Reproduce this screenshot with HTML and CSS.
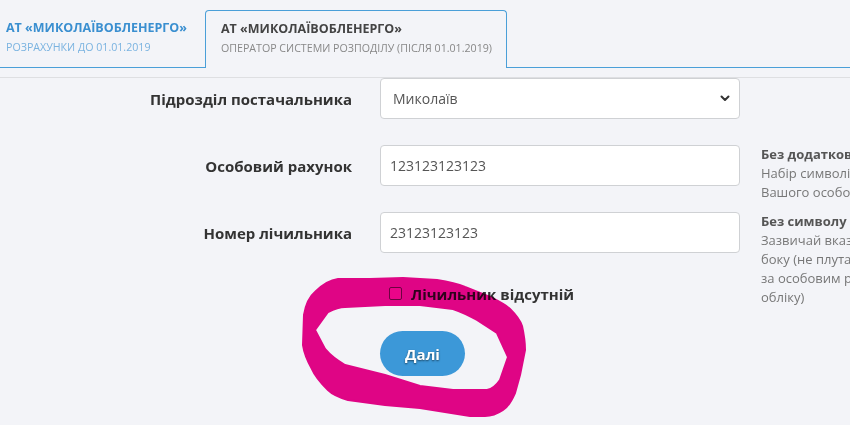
FILE: index.html
```html
<!DOCTYPE html>
<html lang="uk">
<head>
<meta charset="utf-8">
<title>Миколаївобленерго</title>
<link rel="stylesheet" href="styles.css">
</head>
<body>
<div class="tabs">
  <div class="tab tab-first">
    <div class="tab-title">АТ «МИКОЛАЇВОБЛЕНЕРГО»</div>
    <div class="tab-sub">РОЗРАХУНКИ ДО 01.01.2019</div>
  </div>
  <div class="tab tab-active">
    <div class="tab-title">АТ «МИКОЛАЇВОБЛЕНЕРГО»</div>
    <div class="tab-sub">ОПЕРАТОР СИСТЕМИ РОЗПОДІЛУ (ПІСЛЯ 01.01.2019)</div>
  </div>
</div>
<div class="panel">
  <div class="form">
    <div class="label">Підрозділ постачальника</div>
    <div class="select">
      <span>Миколаїв</span>
      <svg class="chevron" width="10" height="7" viewBox="0 0 10 7"><path d="M1.5 1.5 L5 5 L8.5 1.5" fill="none" stroke="#333" stroke-width="2" stroke-linecap="round" stroke-linejoin="round"/></svg>
    </div>
    <div class="help"></div>

    <div class="label">Особовий рахунок</div>
    <div class="input">123123123123</div>
    <div class="help">
      <div class="help-title">Без додаткових символів</div>
      <div>Набір символів, що складається з цифр</div>
      <div>Вашого особового рахунку</div>
    </div>

    <div class="label">Номер лічильника</div>
    <div class="input">23123123123</div>
    <div class="help">
      <div class="help-title">Без символу "№"</div>
      <div>Зазвичай вказаний на лицьовому</div>
      <div>боку (не плутати з номером пломби)</div>
      <div>за особовим рахунком приладу</div>
      <div>обліку)</div>
    </div>

    <div class="spacer"></div>
    <label class="check">
      <span class="box"></span>
      <span class="check-text">Лічильник відсутній</span>
    </label>
    <div class="spacer"></div>

    <div class="spacer"></div>
    <div class="actions">
      <button class="btn" type="button">Далі</button>
    </div>
    <div class="spacer"></div>
  </div>
</div>
<svg class="scribble" width="850" height="425" viewBox="0 0 850 425">
  <path fill="#ea0589" fill-rule="evenodd" stroke="#ea0589" stroke-width="2" stroke-linejoin="round"
    d="M338,279 C350,279 360,279 370,279 L403,278 L437,280 C450,282 458,284 465,287 L490,297 C500,302 506,305 510,309 C517,316 520,320 522,326 C524,335 525,343 525,350 L520,375 L515,393 C511,402 508,407 503,410 C497,414 490,416 485,416 L470,416 L420,408 L385,405 L348,400 C338,397 332,394 328,390 C320,382 315,376 312,369 C307,360 304,352 303,345 L304,315 C306,303 309,297 315,292 C322,285 330,280 338,279 Z
       M385,305 L420,305 L453,309 C462,312 470,316 477,320 L497,333 L508,357 L500,380 C496,386 492,389 487,390 L453,390 L420,386 L385,375 L345,365 C336,360 330,355 325,349 L315,330 L328,312 C334,309 339,307 345,307 Z"/>
</svg>
</body>
</html>
```

FILE: styles.css
```css
html, body {
  margin: 0;
  padding: 0;
}
body {
  width: 850px;
  height: 425px;
  overflow: hidden;
  background: #f3f4f8;
  font-family: "Open Sans", "Noto Sans", sans-serif;
  color: #333;
  position: relative;
}
.tabs {
  display: flex;
  align-items: flex-end;
  height: 67px;
  border-bottom: 1px solid #4a9fd8;
}
.tab {
  box-sizing: border-box;
  padding: 9px 14px 13px 15px;
  white-space: nowrap;
}
.tab-first {
  width: 205px;
  padding-left: 6px;
  padding-bottom: 12px;
}
.tab-active {
  height: 58px;
  border: 1px solid #4a9fd8;
  border-bottom: none;
  border-radius: 4px 4px 0 0;
  background: #f3f4f8;
  margin-bottom: -1px;
}
.tab-title {
  font-size: 12.5px;
  font-weight: 700;
  line-height: 18px;
  color: #444;
}
.tab-sub {
  font-size: 10.65px;
  line-height: 16px;
  margin-top: 2px;
  color: #888;
}
.tab-first .tab-title {
  color: #3a8fd0;
}
.tab-first .tab-sub {
  color: #7ab3e0;
}
.panel {
  margin-top: 9px;
  border-top: 1px solid #dedfe2;
}
.form {
  display: grid;
  grid-template-columns: 380px 360px 300px;
  grid-template-rows: 41px 41px 41px 26px 45px;
  row-gap: 26px;
}
.label {
  padding-right: 28px;
  text-align: right;
  font-size: 15px;
  font-weight: 700;
  color: #333;
  display: flex;
  align-items: center;
  justify-content: flex-end;
}
.select, .input {
  box-sizing: border-box;
  height: 41px;
  background: #fff;
  border: 1px solid #cfd1d4;
  border-radius: 4px;
  font-size: 14px;
  color: #555;
  display: flex;
  align-items: center;
}
.select {
  padding: 0 9px 0 12px;
  justify-content: space-between;
}
.input {
  padding-left: 9px;
}
.chevron {
  display: block;
}
.help {
  padding-left: 21px;
  height: 41px;
  font-size: 13px;
  line-height: 19px;
  color: #777;
  white-space: nowrap;
  overflow: visible;
}
.help-title {
  font-weight: 700;
  color: #555;
}
.check {
  display: flex;
  align-items: center;
  padding-left: 9px;
  padding-top: 3px;
}
.box {
  box-sizing: border-box;
  width: 13px;
  height: 13px;
  border: 1px solid #767676;
  border-radius: 2px;
  background: #fff;
  margin-right: 9px;
}
.check-text {
  font-size: 15px;
  font-weight: 700;
  line-height: 22px;
  color: #333;
}
.actions {
  display: flex;
}
.btn {
  width: 85px;
  height: 45px;
  border: none;
  border-radius: 23px;
  background: #3c98d8;
  color: #fff;
  font-family: "Open Sans", "Noto Sans", sans-serif;
  font-size: 15px;
  font-weight: 700;
  text-shadow: 0 1px 2px rgba(0, 0, 0, 0.55);
  padding: 0;
}
.scribble {
  position: absolute;
  left: 0;
  top: 0;
  pointer-events: none;
  mix-blend-mode: multiply;
}
```
